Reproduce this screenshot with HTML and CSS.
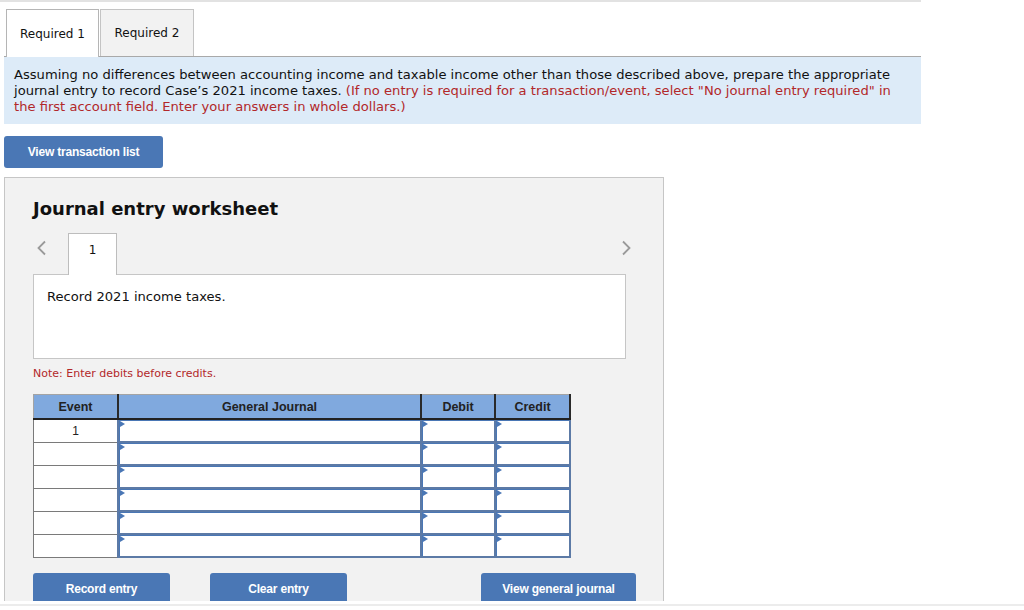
FILE: index.html
```html
<!DOCTYPE html>
<html>
<head>
<meta charset="utf-8">
<link rel="stylesheet" href="styles.css">
</head>
<body>
<div class="frame">
  <div class="topbar"></div>
  <div class="container">
    <div class="tabs">
      <div class="tab active">Required 1</div>
      <div class="tab">Required 2</div>
    </div>
    <div class="instructions">
      Assuming no differences between accounting income and taxable income other than those described above, prepare the appropriate journal entry to record Case’s 2021 income taxes. <span class="red">(If no entry is required for a transaction/event, select "No journal entry required" in the first account field. Enter your answers in whole dollars.)</span>
    </div>
    <button class="btn btn-list">View transaction list</button>
    <div class="panel">
      <h2 class="title">Journal entry worksheet</h2>
      <div class="nav">
        <svg class="chev" width="12" height="16" viewBox="0 0 12 16"><path d="M9 1.5 L2.5 8 L9 14.5" fill="none" stroke="#9a9a9a" stroke-width="1.8"/></svg>
        <div class="numtab">1</div>
        <svg class="chev chev-right" width="12" height="16" viewBox="0 0 12 16"><path d="M3 1.5 L9.5 8 L3 14.5" fill="none" stroke="#9a9a9a" stroke-width="1.8"/></svg>
      </div>
      <div class="record">Record 2021 income taxes.</div>
      <div class="note">Note: Enter debits before credits.</div>
      <table class="journal">
        <thead>
          <tr><th class="c-event">Event</th><th class="c-gj">General Journal</th><th class="c-dr">Debit</th><th class="c-cr">Credit</th></tr>
        </thead>
        <tbody>
          <tr><td class="ev">1</td><td class="in"><i></i></td><td class="in"><i></i></td><td class="in"><i></i></td></tr>
          <tr><td class="ev"></td><td class="in"><i></i></td><td class="in"><i></i></td><td class="in"><i></i></td></tr>
          <tr><td class="ev"></td><td class="in"><i></i></td><td class="in"><i></i></td><td class="in"><i></i></td></tr>
          <tr><td class="ev"></td><td class="in"><i></i></td><td class="in"><i></i></td><td class="in"><i></i></td></tr>
          <tr><td class="ev"></td><td class="in"><i></i></td><td class="in"><i></i></td><td class="in"><i></i></td></tr>
          <tr><td class="ev"></td><td class="in"><i></i></td><td class="in"><i></i></td><td class="in"><i></i></td></tr>
        </tbody>
      </table>
      <div class="actions">
        <button class="btn btn-rec">Record entry</button>
        <button class="btn btn-clear">Clear entry</button>
        <button class="btn btn-view">View general journal</button>
      </div>
    </div>
  </div>
</div>
<div class="bottomline"></div>
</body>
</html>
```

FILE: styles.css
```css
html, body {
  margin: 0;
  padding: 0;
  background: #ffffff;
}
body {
  font-family: "DejaVu Sans", Verdana, sans-serif;
  color: #111;
}
.frame {
  height: 601px;
  overflow: hidden;
}
.topbar {
  width: 921px;
  height: 2px;
  background: #e2e2e2;
}
.container {
  margin-left: 4px;
  width: 917px;
}
.tabs {
  display: flex;
  gap: 1px;
  padding-left: 2px;
  margin-top: 7px;
  border-bottom: 1px solid #a9a9a9;
  height: 47px;
}
.tab {
  box-sizing: border-box;
  width: 93px;
  height: 47px;
  border: 1px solid #c4c4c4;
  border-bottom: none;
  background: #f2f2f2;
  font-size: 12px;
  display: flex;
  align-items: center;
  justify-content: center;
}
.tab + .tab {
  width: 94px;
}
.tab.active {
  background: #fff;
  height: 48px;
  border-color: #b5b5b5;
}
.instructions {
  background: #ddebf8;
  padding: 10px 10px 9px 10px;
  font-size: 13.1px;
  line-height: 16px;
}
.red {
  color: #b2282a;
}
.btn {
  border: none;
  border-radius: 3px;
  background: #4a77b5;
  color: #fff;
  font-family: "Liberation Sans", Arial, sans-serif;
  font-weight: bold;
  font-size: 12px;
  letter-spacing: -0.2px;
  cursor: pointer;
  padding: 0;
}
.btn-list {
  display: block;
  margin-top: 12px;
  width: 159px;
  height: 32px;
}
.panel {
  margin-top: 9px;
  width: 660px;
  box-sizing: border-box;
  border: 1px solid #c6c6c6;
  background: #f2f2f2;
  padding: 20px 37px 40px 28px;
}
.title {
  margin: 0;
  font-size: 18px;
  line-height: 22px;
  font-weight: bold;
}
.nav {
  margin-top: 13px;
  display: flex;
  align-items: flex-end;
  height: 41px;
}
.chev {
  align-self: flex-start;
  margin-top: 7px;
  margin-left: 3px;
}
.chev-right {
  margin-left: auto;
  margin-right: -6px;
}
.numtab {
  box-sizing: border-box;
  margin-left: 20px;
  width: 49px;
  height: 42px;
  margin-bottom: -1px;
  background: #fff;
  border: 1px solid #bdbdbd;
  border-bottom: none;
  font-size: 12px;
  line-height: 14px;
  text-align: center;
  padding-top: 9px;
  position: relative;
  z-index: 1;
}
.record {
  box-sizing: border-box;
  height: 85px;
  background: #fff;
  border: 1px solid #c6c6c6;
  padding: 14px 13px;
  font-size: 13.1px;
  line-height: 16px;
}
.note {
  margin-top: 8px;
  font-size: 11px;
  line-height: 13px;
  color: #b2282a;
}
.journal {
  margin-top: 14px;
  border-collapse: collapse;
  font-family: "Liberation Sans", Arial, sans-serif;
  font-size: 12.5px;
  background: #fff;
}
.journal th {
  background: #80a9de;
  height: 23px;
  padding: 0;
  font-weight: bold;
  color: #222;
  border-top: 1px solid #a4a4a4;
  border-bottom: 2px solid #222;
  border-left: 2px solid #2a2a2a;
}
.journal th.c-event {
  border-left: 1px solid #a4a4a4;
}
.journal th.c-cr {
  border-right: 2px solid #2a2a2a;
}
.c-event { width: 83px; }
.c-gj { width: 301px; }
.c-dr { width: 72px; }
.c-cr { width: 73px; }
.journal td {
  height: 21px;
  padding: 0;
}
.journal td.ev {
  border: 1px solid #7a7a7a;
  text-align: center;
  font-size: 12px;
  color: #222;
  vertical-align: middle;
}
.journal td.in {
  border: 2px solid #5c7aa6;
  background: #fff;
  position: relative;
  box-shadow: inset 1px 1px 0 #4a77b5;
}
.journal td.in i {
  position: absolute;
  left: 1px;
  top: 1px;
  width: 0;
  height: 0;
  border-top: 3px solid transparent;
  border-bottom: 3px solid transparent;
  border-left: 5px solid #4a77b5;
}
.actions {
  margin-top: 15px;
  display: flex;
}
.actions .btn {
  height: 32px;
  flex-shrink: 0;
}
.btn-rec {
  width: 137px;
}
.btn-clear {
  width: 137px;
  margin-left: 40px;
}
.btn-view {
  width: 155px;
  margin-left: 134px;
}
.bottomline {
  margin-top: 3px;
  height: 2px;
  background: #ececec;
}
```
